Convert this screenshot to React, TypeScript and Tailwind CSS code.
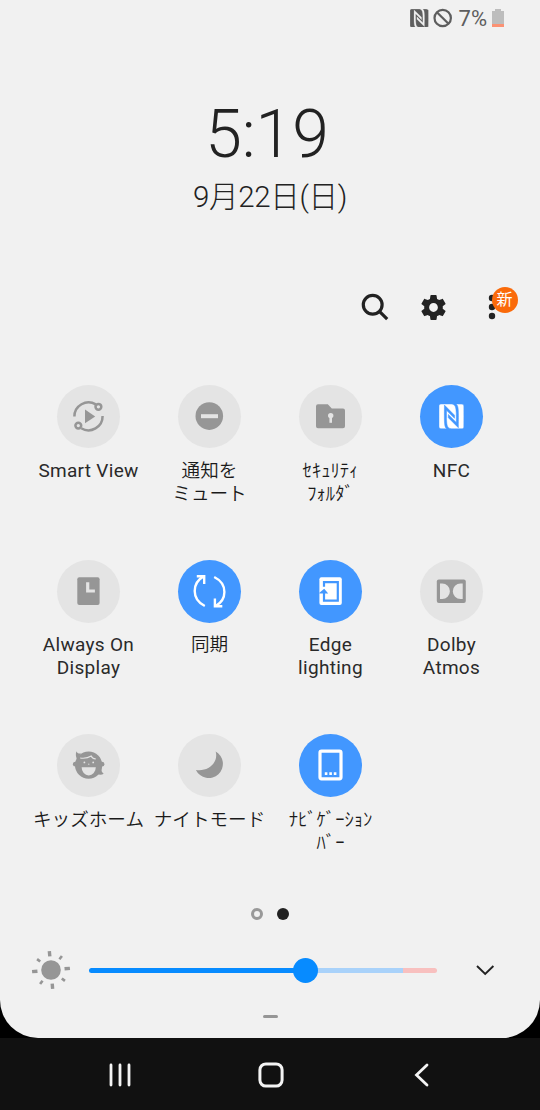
import type { ReactNode } from "react";
import { SiNfc } from "react-icons/si";

interface Tile {
  id: string;
  /** Label, one entry per line. */
  label: string[];
  /** Japanese labels are set lighter and slightly smaller. */
  ja?: boolean;
  on?: boolean;
  icon: ReactNode;
}

// All tile icons are drawn on the 63x63 grid of the round button.
const TILES: Tile[] = [
  {
    id: "smart-view",
    label: ["Smart View"],
    icon: (
      <>
        <g fill="none" stroke="currentColor" strokeWidth="2.5">
          <path d="M17.4 31.6A14.1 14.1 0 0 1 38.8 19.4" />
          <path d="M45.6 31A14.1 14.1 0 0 1 24.2 43.2" />
          <circle cx="41.4" cy="21.8" r="2.9" />
          <circle cx="21.3" cy="40.6" r="2.9" />
        </g>
        <path d="M28 24.6v13.6l10.2-6.8z" fill="currentColor" />
      </>
    ),
  },
  {
    id: "mute",
    label: ["通知を", "ミュート"],
    ja: true,
    icon: (
      <>
        <circle cx="31.3" cy="31.1" r="13.8" fill="currentColor" />
        <path d="M23 29.2h17v4H23z" fill="#e4e4e4" />
      </>
    ),
  },
  {
    id: "secure-folder",
    label: ["ｾｷｭﾘﾃｨ", "ﾌｫﾙﾀﾞ"],
    ja: true,
    icon: (
      <>
        <path
          d="M19 19.2h9.8l4 4.2H44a2 2 0 0 1 2 2v15.8a2 2 0 0 1-2 2H19a2 2 0 0 1-2-2v-20a2 2 0 0 1 2-2z"
          fill="currentColor"
        />
        <circle cx="31.7" cy="30.6" r="2.7" fill="#e4e4e4" />
        <path d="M30.4 31h2.6v6.8h-2.6z" fill="#e4e4e4" />
      </>
    ),
  },
  {
    id: "nfc",
    label: ["NFC"],
    on: true,
    icon: <SiNfc x="18.9" y="18.9" size={25} stroke="#4297ff" strokeWidth="0.5" />,
  },
  {
    id: "always-on",
    label: ["Always On", "Display"],
    icon: (
      <>
        <rect x="20.3" y="17.2" width="22.3" height="27.8" rx="2" fill="currentColor" />
        <path d="M30.7 22.2V31h7.2" fill="none" stroke="#e4e4e4" strokeWidth="3.2" />
      </>
    ),
  },
  {
    id: "sync",
    label: ["同期"],
    ja: true,
    on: true,
    icon: (
      <g fill="none" stroke="currentColor" strokeWidth="2.4">
        <path d="M26.8 46C19.8 42.5 16.7 37 16.7 31c0-6 3.3-11.4 8.8-14.6" />
        <path d="M18.8 16.2h7.4v7.8" />
        <path d="M36.2 17C43.2 20.5 46.4 26 46.4 32c0 6-3.3 11-8.8 14" />
        <path d="M44.3 46.2h-7.4v-7.6" />
      </g>
    ),
  },
  {
    id: "edge-lighting",
    label: ["Edge", "lighting"],
    on: true,
    icon: (
      <>
        <rect x="20.4" y="17.2" width="22.4" height="27.8" rx="2" fill="currentColor" />
        <path
          d="M25 26.8v-4.6h13.8v18.4H25V32"
          fill="none"
          stroke="#4297ff"
          strokeWidth="2.2"
        />
        <path d="M20.4 33.6h8.8l-4-4.8-4.8 4z" fill="#4297ff" />
      </>
    ),
  },
  {
    id: "dolby",
    label: ["Dolby", "Atmos"],
    icon: (
      <>
        <rect x="16.8" y="19.4" width="29" height="23.6" rx="2" fill="currentColor" />
        <path
          d="M20 23.6h2.2a7.7 7.7 0 0 1 0 15.4H20zM42.7 23.6h-2.2a7.7 7.7 0 0 0 0 15.4h2.2z"
          fill="#e4e4e4"
        />
      </>
    ),
  },
  {
    id: "kids",
    label: ["キッズホーム"],
    ja: true,
    icon: (
      <>
        <g fill="currentColor">
          <circle cx="31.6" cy="31.2" r="13.6" />
          <path d="M19.4 17.2c.6 1.8 2.4 2.6 4.6 2.2l-3.8 6c-1.4-2.4-1.8-5.2-.8-8.2z" />
          <circle cx="18.3" cy="30.2" r="2.4" />
          <circle cx="45" cy="30.2" r="2.4" />
          <path d="M44.5 33.6c-.4 3 .2 4.6 2.2 6.2-2 1.2-4.6 1.2-6.7 0z" />
        </g>
        <path
          d="M23.2 24c4.2.6 8.2-.2 11-2 .6 1.8 2.2 2.6 4.6 3"
          fill="none"
          stroke="#e4e4e4"
          strokeWidth="1.1"
        />
        <g fill="#e4e4e4">
          <circle cx="27.4" cy="28.4" r=".9" />
          <circle cx="36.2" cy="28.4" r=".9" />
          <circle cx="31.8" cy="30.2" r=".6" />
          <path d="M24.6 33.2h14.2a7.1 8.2 0 0 1-14.2 0z" />
        </g>
      </>
    ),
  },
  {
    id: "night",
    label: ["ナイトモード"],
    ja: true,
    icon: (
      <path
        d="M37.7 17.4A14.2 14.2 0 1 1 17.9 35.9C30 38 40.8 28.700 37.700 17.400z"
        fill="currentColor"
      />
    ),
  },
  {
    id: "navbar",
    label: ["ﾅﾋﾞｹﾞｰｼｮﾝ", "ﾊﾞｰ"],
    ja: true,
    on: true,
    icon: (
      <>
        <rect
          x="21"
          y="17.2"
          width="21"
          height="27.6"
          rx="1.5"
          fill="none"
          stroke="currentColor"
          strokeWidth="3.2"
        />
        <path
          d="M25.8 38.3h2.6v2.6h-2.6zM30.3 38.3h2.6v2.6h-2.6zM34.8 38.3h2.6v2.6h-2.6z"
          fill="currentColor"
        />
      </>
    ),
  },
];

function StatusBar() {
  return (
    <div className="flex h-9 items-center justify-end pr-9 text-[#5e5e5e]">
      <SiNfc size={18.5} stroke="#f1f1f1" strokeWidth="0.3" />
      <svg width="20" height="20" viewBox="0 0 20 20" className="ml-1">
        <g fill="none" stroke="currentColor" strokeWidth="2.2">
          <circle cx="9.7" cy="10" r="8.2" />
          <path d="M3.9 4.2l11.6 11.6" />
        </g>
      </svg>
      <span className="mt-[2px] ml-[6px] text-[22px] leading-none">7%</span>
      <svg width="12" height="18" viewBox="0 0 12 18" className="ml-[5px]">
        <path d="M0 2h3V0h6v2h3v13H0z" fill="#bdbdbd" />
        <path d="M0 15h12v3H0z" fill="#fb9274" />
      </svg>
    </div>
  );
}

function Toolbar() {
  return (
    <div className="mt-[71px] flex h-[40px] items-center justify-end pr-[20px] text-[#222]">
      <svg width="30" height="30" viewBox="0 0 30 30">
        <g fill="none" stroke="currentColor" strokeWidth="3.2">
          <circle cx="12.7" cy="12.7" r="9.4" />
          <path d="M19.4 19.4l7.8 7.8" />
        </g>
      </svg>
      <svg width="31" height="31" viewBox="0 0 24 24" className="ml-[28px]">
        <path
          d="M19.14 12.94c.04-.3.06-.61.06-.94 0-.32-.02-.64-.07-.94l2.03-1.58c.18-.14.23-.41.12-.61l-1.92-3.32c-.12-.22-.37-.29-.59-.22l-2.39.96c-.5-.38-1.03-.7-1.62-.94l-.36-2.54c-.04-.24-.24-.41-.48-.41h-3.84c-.24 0-.43.17-.47.41l-.36 2.54c-.59.24-1.13.57-1.62.94l-2.39-.96c-.22-.08-.47 0-.59.22L2.74 8.87c-.12.21-.08.47.12.61l2.03 1.58c-.05.3-.09.63-.09.94s.02.64.07.94l-2.03 1.58c-.18.14-.23.41-.12.61l1.92 3.32c.12.22.37.29.59.22l2.39-.96c.5.38 1.03.7 1.62.94l.36 2.54c.05.24.24.41.48.41h3.84c.24 0 .44-.17.47-.41l.36-2.54c.59-.24 1.13-.56 1.62-.94l2.39.96c.22.08.47 0 .59-.22l1.92-3.32c.12-.22.07-.47-.12-.61l-2.01-1.58zM12 15.4c-1.87 0-3.4-1.53-3.4-3.4s1.53-3.4 3.4-3.4 3.4 1.53 3.4 3.4-1.53 3.4-3.4 3.4z"
          fill="currentColor"
        />
      </svg>
      <div className="relative ml-[27px] h-[40px] w-[44px]">
        <svg width="44" height="40" viewBox="0 0 44 40" fill="currentColor">
          <circle cx="16" cy="11" r="3.2" />
          <circle cx="16" cy="20" r="3.2" />
          <circle cx="16" cy="29" r="3.2" />
        </svg>
        <span className="absolute top-0 left-[15.5px] flex h-[26px] w-[26px] items-center justify-center rounded-full bg-[#fa6a0a] text-[16px] leading-none text-white">
          新
        </span>
      </div>
    </div>
  );
}

function QuickTile({ tile }: { tile: Tile }) {
  return (
    <div className="flex h-[174.5px] flex-col items-center">
      <div
        className={
          tile.on
            ? "h-[63px] w-[63px] rounded-full bg-[#4297ff] text-white"
            : "h-[63px] w-[63px] rounded-full bg-[#e4e4e4] text-[#969696]"
        }
      >
        <svg width="63" height="63" viewBox="0 0 63 63">
          {tile.icon}
        </svg>
      </div>
      <div
        className={
          tile.ja
            ? "mt-[11.5px] text-center text-[18.6px] leading-[23px] font-[350] whitespace-nowrap text-[#1a1a1a]"
            : "mt-[10.5px] text-center text-[19px] leading-[23px] tracking-[0.3px] whitespace-nowrap text-[#2a2a2a]"
        }
      >
        {tile.label.map((line) => (
          <div key={line}>{line}</div>
        ))}
      </div>
    </div>
  );
}

function BrightnessRow() {
  return (
    <div className="mt-[30.5px] flex h-[40px] items-center pl-[31px]">
      <svg width="40" height="40" viewBox="-20 -20 40 40" fill="#969696">
        <circle r="9.8" />
        {[0, 90, 180, 270].map((a) => (
          <g key={a} transform={`rotate(${a - 5})`}>
            <path d="M-1.7-19h3.4v5.4h-3.4z" />
            <path d="M-1.3-17.7h2.6v4h-2.6z" transform="rotate(43)" />
          </g>
        ))}
      </svg>
      <div className="relative ml-[17.5px] flex h-[4.5px] w-[348px] rounded-full">
        <div className="w-[216px] rounded-l-full bg-[#078bff]" />
        <div className="w-[98px] bg-[#a9d2fa]" />
        <div className="flex-1 rounded-r-full bg-[#f8c0bf]" />
        <div className="absolute top-[-10.5px] left-[204px] h-[25.5px] w-[25.5px] rounded-full bg-[#078bff]" />
      </div>
      <svg width="20" height="12" viewBox="0 0 20 12" className="ml-[38.5px]">
        <path d="M2 2l8.2 8 8.2-8" fill="none" stroke="#222" strokeWidth="1.9" />
      </svg>
    </div>
  );
}

function NavBar() {
  return (
    <div className="grid h-[72px] grid-cols-[120px_151px_151px_118px] items-center bg-[#111] pt-[1px]">
      <div />
      <svg width="26" height="26" viewBox="0 0 26 26" className="-ml-[13.5px]">
        <path
          d="M4 3v20M13 3v20M22 3v20"
          stroke="#f4f4f4"
          strokeWidth="2.8"
          strokeLinecap="round"
        />
      </svg>
      <svg width="26" height="26" viewBox="0 0 26 26" className="-ml-[13.5px]">
        <rect x="1.9" y="1.9" width="22.2" height="22.2" rx="6" fill="none" stroke="#f4f4f4" strokeWidth="3" />
      </svg>
      <svg width="26" height="26" viewBox="0 0 26 26" className="-ml-[13.5px]">
        <path
          d="M18 3L7.500 13 18 23"
          fill="none"
          stroke="#f4f4f4"
          strokeWidth="2.8"
          strokeLinecap="round"
        />
      </svg>
    </div>
  );
}

export default function App() {
  return (
    <div className="flex h-[1110px] w-[540px] flex-col overflow-hidden bg-black font-[Roboto,'Noto_Sans_CJK_JP',sans-serif]">
      <div className="flex h-[1038px] flex-col rounded-b-[38px] bg-[#f1f1f1]">
        <StatusBar />
        <div className="mt-[66px] text-center font-light text-[#222]">
          <div className="pr-[6px] text-[66px] leading-[66px]">5:19</div>
          <div className="mt-[10px] text-[29.5px] leading-[38px] tracking-[-0.3px]">9月22日(日)</div>
        </div>
        <Toolbar />
        <div className="mt-[58.4px] grid grid-cols-4 px-[28px]">
          {TILES.map((tile) => (
            <QuickTile key={tile.id} tile={tile} />
          ))}
        </div>
        <div className="-mt-[1px] flex h-[12px] justify-center gap-[13.5px]">
          <div className="h-[12px] w-[12px] rounded-full border-[3px] border-[#999]" />
          <div className="h-[12px] w-[12px] rounded-full bg-[#222]" />
        </div>
        <BrightnessRow />
        <div className="mx-auto mt-[25px] h-[2.5px] w-[15px] rounded-full bg-[#969696]" />
      </div>
      <NavBar />
    </div>
  );
}
